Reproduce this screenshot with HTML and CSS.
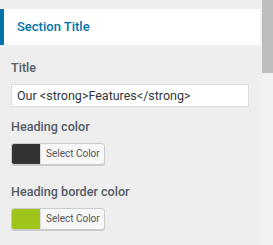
FILE: index.html
```html
<!doctype html>
<html lang="en">
  <head>
    <meta charset="UTF-8" />
    <meta name="viewport" content="width=device-width, initial-scale=1.0" />
    <title>Section Title</title>
    <link rel="stylesheet" href="styles.css">
  </head>

  <body>
    <div class="panel">
      <h3 class="section-head">Section Title</h3>
      <div class="controls">
        <div class="control">
          <label class="control-label" for="title">Title</label>
          <input id="title" class="text-input" type="text" value="Our <strong>Features</strong>" />
        </div>
        <div class="control color-control">
          <span class="control-label">Heading color</span>
          <button class="color-button">
            <span class="swatch swatch-dark"></span>
            <span class="color-text">Select Color</span>
          </button>
        </div>
        <div class="control color-control">
          <span class="control-label">Heading border color</span>
          <button class="color-button">
            <span class="swatch swatch-green"></span>
            <span class="color-text">Select Color</span>
          </button>
        </div>
      </div>
      <div class="next-head"></div>
    </div>
    <div class="scrollbar">
      <div class="thumb"></div>
    </div>
  </body>
</html>
```

FILE: styles.css
```css
* {
  box-sizing: border-box;
  padding: 0;
  margin: 0;
  font-family: Roboto, 'Noto Sans', sans-serif;
}

html,
body {
  height: 100%;
  background: #eeeeee;
}

body {
  display: flex;
  overflow: hidden;
}

.panel {
  flex: 0 0 260px;
  padding-top: 9px;
}

.section-head {
  height: 36px;
  line-height: 36px;
  padding-left: 13px;
  background: #fff;
  border-left: 4px solid #0073aa;
  color: #0073aa;
  font-size: 13px;
  font-weight: 500;
}

.controls {
  padding: 13px 11px 0;
}

.control {
  display: flex;
  flex-direction: column;
  align-items: flex-start;
  margin-bottom: 10px;
}

.color-control {
  margin-bottom: 17px;
}

.control-label {
  font-size: 12.6px;
  line-height: 20px;
  font-weight: 500;
  color: #555d66;
  margin-bottom: 6px;
}

.text-input {
  width: 238px;
  height: 23px;
  padding: 0 5px;
  border: 1px solid #ddd;
  background: #fff;
  color: #32373c;
  font-size: 12.5px;
  outline: none;
}

.color-button {
  display: flex;
  height: 22px;
  border: 1px solid #ccc;
  border-radius: 3px;
  box-shadow: 0 1px 0 #ccc;
  background: #f7f7f7;
  overflow: hidden;
  cursor: pointer;
}

.swatch {
  width: 28px;
  height: 100%;
}

.swatch-dark {
  background: #333333;
}

.swatch-green {
  background: #9fc51a;
}

.color-text {
  width: 64px;
  padding-left: 5px;
  border-left: 1px solid #ddd;
  line-height: 20px;
  font-size: 10px;
  color: #555;
  text-align: left;
}

.next-head {
  width: 4px;
  height: 8px;
  margin-top: -2px;
  background: #0073aa;
}

.scrollbar {
  flex: 0 0 13px;
  background: #f1f1f1;
  padding-left: 2px;
}

.thumb {
  height: 73px;
  background: #bdbdbd;
}
```
